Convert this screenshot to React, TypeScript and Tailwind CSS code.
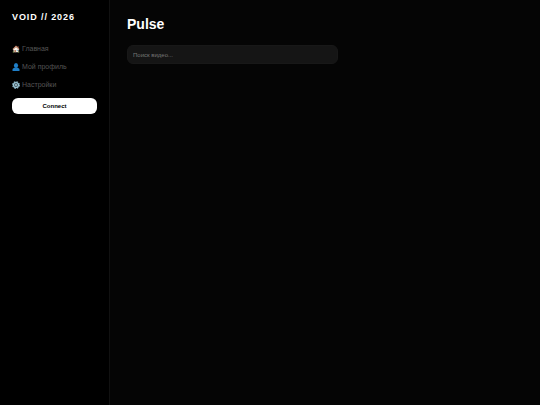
import type { ReactNode } from "react";

function HomeIcon() {
  return (
    <svg viewBox="0 0 16 16" className="size-2 shrink-0" aria-hidden="true">
      <path d="M3 8h10v6.500H3z" fill="#f6ece0" />
      <path d="M11 2.500h2v4h-2z" fill="#b5674d" />
      <path d="M8 1 1 8l1.200 1.400L8 4.200l5.800 5.200L15 8z" fill="#d68f70" />
      <path d="M8 4 3 8.700V10h10V8.700z" fill="#fff6ea" />
      <path d="M5 10h2.500v4.500H5z" fill="#a5633f" />
      <path d="M9.500 9.500H12V12H9.500z" fill="#8cbfd4" />
      <path d="M1.500 13h2.500v2H1.500zM12 13h2.500v2H12z" fill="#7d9a4a" />
    </svg>
  );
}

function ProfileIcon() {
  return (
    <svg viewBox="0 0 16 16" className="size-2 shrink-0" aria-hidden="true">
      <ellipse cx="8" cy="5" rx="4.200" ry="5" fill="#1f7fc8" />
      <path d="M6 8h4v3H6z" fill="#1a6cad" />
      <path d="M1 16v-3C1 11 4 10 6 9.700l2 1 2-1c2 .3 5 1.300 5 3.300v3z" fill="#1f7fc8" />
    </svg>
  );
}

function GearIcon() {
  return (
    <svg viewBox="0 0 16 16" className="size-2 shrink-0" aria-hidden="true">
      <circle cx="8" cy="8" r="6.600" fill="none" stroke="#8db8ca" strokeWidth="2.400" strokeDasharray="3.200 1.984" />
      <circle cx="8" cy="8" r="4.900" fill="none" stroke="#9cc6d6" strokeWidth="2.600" />
      <path d="M8 3v10M3.700 5.500l8.600 5M12.300 5.500l-8.600 5" stroke="#7ba3b4" strokeWidth="1.300" />
      <circle cx="8" cy="8" r="2" fill="#b4d3df" />
      <circle cx="8" cy="8" r="0.800" fill="#304650" />
    </svg>
  );
}

function NavLink({ icon, children }: { icon: ReactNode; children: ReactNode }) {
  return (
    <a href="#" className="flex items-center gap-0.5 text-[7px] leading-2 text-[#555555]">
      {icon}
      <span>{children}</span>
    </a>
  );
}

export default function App() {
  return (
    <div className="flex min-h-screen bg-[#050505] font-['Liberation_Sans',Arial,sans-serif] text-white">
      <aside className="w-[110px] shrink-0 border-r border-[#111111] bg-black px-3 py-3">
        <div className="text-[9px] leading-[10px] font-bold tracking-widest whitespace-nowrap">VOID // 2026</div>
        <nav className="mt-[23px] flex flex-col gap-2.5">
          <NavLink icon={<HomeIcon />}>Главная</NavLink>
          <NavLink icon={<ProfileIcon />}>Мой профиль</NavLink>
          <NavLink icon={<GearIcon />}>Настройки</NavLink>
        </nav>
        <button type="button" className="mt-[9px] block h-4 w-full rounded-md bg-white text-[6px] leading-4 font-bold text-black">
          Connect
        </button>
      </aside>
      <main className="flex-1 px-[17px] py-4">
        <h1 className="text-[14px] leading-4 font-bold">Pulse</h1>
        <input
          type="search"
          aria-label="Поиск видео"
          placeholder="Поиск видео..."
          className="mt-[13px] block h-[19px] w-full max-w-[211px] rounded-md border border-[#181818] bg-[#151515] px-[5px] text-[6px] text-white outline-none placeholder:text-[#757575]"
        />
      </main>
    </div>
  );
}
